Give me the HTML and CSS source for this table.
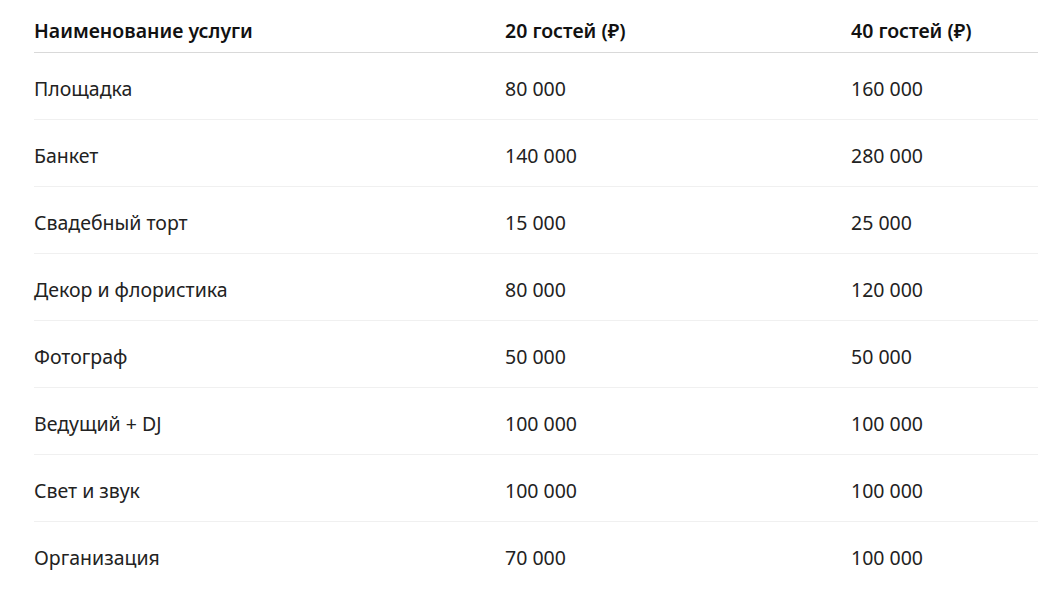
FILE: index.html
```html
<!DOCTYPE html>
<html lang="ru">
<head>
<meta charset="utf-8">
<link rel="stylesheet" href="styles.css">
</head>
<body>
<div class="wrap">
<table class="price">
<thead>
<tr><th class="c1">Наименование услуги</th><th class="c2">20 гостей (₽)</th><th class="c3">40 гостей (₽)</th></tr>
</thead>
<tbody>
<tr><td>Площадка</td><td>80 000</td><td>160 000</td></tr>
<tr><td>Банкет</td><td>140 000</td><td>280 000</td></tr>
<tr><td>Свадебный торт</td><td>15 000</td><td>25 000</td></tr>
<tr><td>Декор и флористика</td><td>80 000</td><td>120 000</td></tr>
<tr><td>Фотограф</td><td>50 000</td><td>50 000</td></tr>
<tr><td>Ведущий + DJ</td><td>100 000</td><td>100 000</td></tr>
<tr><td>Свет и звук</td><td>100 000</td><td>100 000</td></tr>
<tr><td>Организация</td><td>70 000</td><td>100 000</td></tr>
</tbody>
</table>
</div>
</body>
</html>
```
FILE: styles.css
```css
html, body {
  margin: 0;
  padding: 0;
  background: #ffffff;
}
.wrap {
  padding: 8px 0 0 34px;
}
.price {
  border-collapse: collapse;
  width: 1004px;
  table-layout: fixed;
  font-family: "Noto Sans", "Open Sans", sans-serif;
  font-size: 19.5px;
  color: #222222;
}
.price th {
  text-align: left;
  font-weight: 600;
  color: #111111;
  height: 44px;
  padding: 0;
  border-bottom: 1px solid #d9d9d9;
  vertical-align: middle;
}
.price .c1 { width: 471px; }
.price .c2 { width: 346px; }
.price td {
  height: 62px;
  padding: 4px 0 0 0;
  border-bottom: 1px solid #f0f0f0;
  vertical-align: middle;
}
.price tbody tr:last-child td {
  border-bottom: none;
}
```
